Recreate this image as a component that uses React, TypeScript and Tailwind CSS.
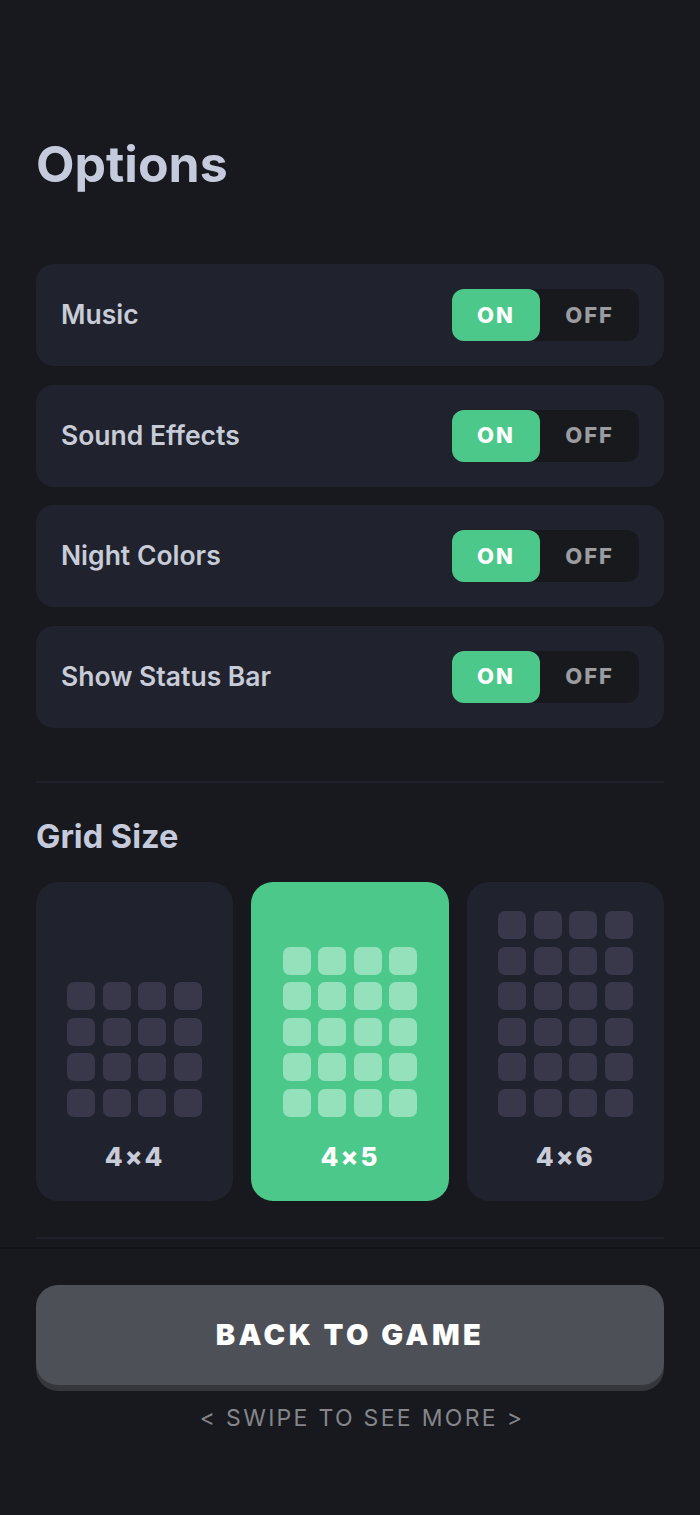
import React from "react";

const font = { fontFamily: "Inter, 'Noto Sans', sans-serif" };

function Toggle() {
  return (
    <div className="flex h-[52px] w-[187px] rounded-[12px] bg-[#17191d]">
      <div className="flex h-full w-[88px] items-center justify-center rounded-[12px] bg-[#4cc98a] text-[22px] font-extrabold tracking-[0.09em] text-white">
        ON
      </div>
      <div className="flex h-full flex-1 items-center justify-center text-[22px] font-extrabold tracking-[0.09em] text-[#9b9ca0]">
        OFF
      </div>
    </div>
  );
}

function Row({ label }: { label: string }) {
  return (
    <div className="flex h-[102px] items-center justify-between rounded-[18px] bg-[#20232d] pl-[25px] pr-[25px]">
      <span className="text-[26.5px] font-semibold text-[#c8ccd8]">{label}</span>
      <Toggle />
    </div>
  );
}

function GridCard({ rows, label, active }: { rows: number; label: string; active?: boolean }) {
  const cells = Array.from({ length: rows * 4 });
  return (
    <div
      className={
        "flex h-[319px] flex-col items-center justify-end rounded-[22px] pb-[28px] " +
        (active ? "bg-[#4cc98a]" : "bg-[#20232d]")
      }
    >
      <div className="grid grid-cols-4 gap-[7.5px]">
        {cells.map((_, i) => (
          <div
            key={i}
            className={"h-[28px] w-[28px] rounded-[7px] " + (active ? "bg-[#95e1bb]" : "bg-[#39374a]")}
          />
        ))}
      </div>
      <div
        className={
          "mt-[24px] text-[26px] font-extrabold leading-[32px] tracking-[0.08em] " +
          (active ? "text-white" : "text-[#c8ccd8]")
        }
      >
        {label}
      </div>
    </div>
  );
}

export default function App() {
  return (
    <div className="flex min-h-[1515px] w-[700px] flex-col bg-[#17191e]" style={font}>
      <div className="px-[36px] pt-[132px]">
        <h1 className="text-[50px] font-bold leading-[64px] text-[#c5cbdc]">Options</h1>
        <div className="mt-[68px] flex flex-col gap-[18.5px]">
          <Row label="Music" />
          <Row label="Sound Effects" />
          <Row label="Night Colors" />
          <Row label="Show Status Bar" />
        </div>
        <div className="mt-[53px] h-[2px] bg-[#1f222b]" />
        <h2 className="mt-[34px] text-[32.5px] font-bold leading-[40px] text-[#c5cbdc]">Grid Size</h2>
        <div className="mt-[25px] grid grid-cols-3 gap-[18px]">
          <GridCard rows={4} label="4×4" />
          <GridCard rows={5} label="4×5" active />
          <GridCard rows={6} label="4×6" />
        </div>
        <div className="mt-[36px] h-[2px] bg-[#1f222b]" />
      </div>
      <div className="mt-[8px] flex flex-1 flex-col border-t-2 border-[#111317] px-[36px] pt-[36px]">
        <button className="flex h-[100px] w-full items-center justify-center rounded-[22px] bg-[#4d5057] text-[29px] font-black tracking-[0.12em] text-white shadow-[0_6px_0_#35373c]">
          BACK TO GAME
        </button>
        <div className="mt-[16px] pl-[24px] text-center text-[23px] font-normal tracking-[0.1em] text-[#85868b]">
          &lt; SWIPE TO SEE MORE &gt;
        </div>
      </div>
    </div>
  );
}
